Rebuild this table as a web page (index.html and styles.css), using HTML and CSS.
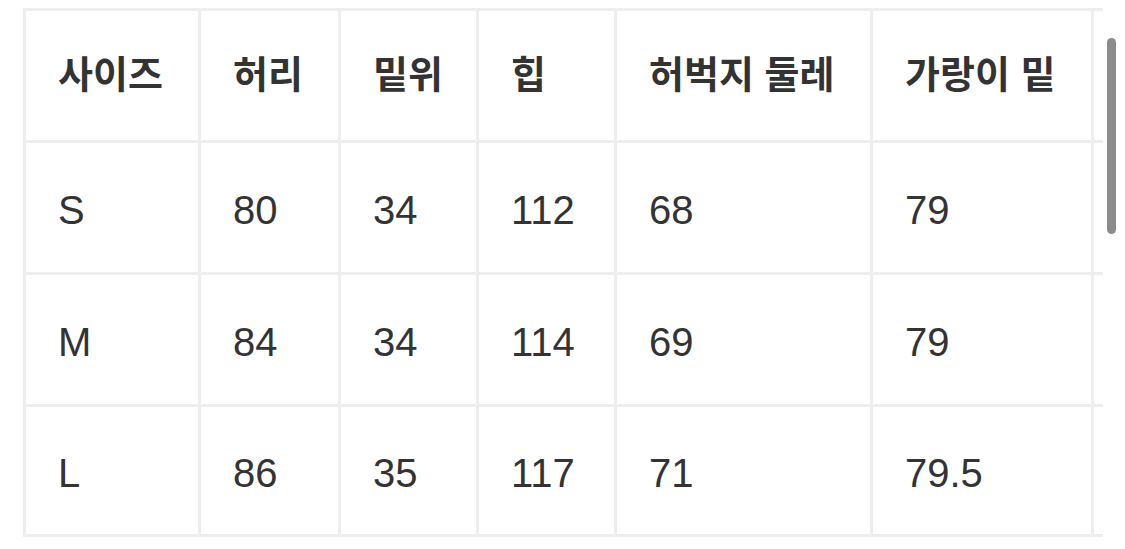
FILE: index.html
```html
<!DOCTYPE html>
<html lang="ko">
<head>
<meta charset="utf-8">
<title>사이즈</title>
<link rel="stylesheet" href="styles.css">
</head>
<body>
<div class="frame">
  <table class="size-table">
    <colgroup>
      <col class="c1"><col class="c2"><col class="c3"><col class="c4"><col class="c5"><col class="c6"><col class="c7">
    </colgroup>
    <tr class="row head">
      <th>사이즈</th><th>허리</th><th>밑위</th><th>힙</th><th>허벅지 둘레</th><th>가랑이 밑</th><th></th>
    </tr>
    <tr class="row">
      <td>S</td><td>80</td><td>34</td><td>112</td><td>68</td><td>79</td><td></td>
    </tr>
    <tr class="row">
      <td>M</td><td>84</td><td>34</td><td>114</td><td>69</td><td>79</td><td></td>
    </tr>
    <tr class="row last">
      <td>L</td><td>86</td><td>35</td><td>117</td><td>71</td><td>79.5</td><td></td>
    </tr>
  </table>
</div>
<div class="scroll-thumb"></div>
</body>
</html>
```

FILE: styles.css
```css
html, body {
  margin: 0;
  padding: 0;
  background: #ffffff;
}
body {
  position: relative;
  width: 1125px;
  height: 549px;
  overflow: hidden;
  font-family: "Liberation Sans", "Noto Sans CJK KR", sans-serif;
  color: #333333;
}
.frame {
  margin: 8px 0 0 23px;
  width: 1080px;
  overflow: hidden;
}
.size-table {
  border-collapse: separate;
  border-spacing: 0;
  table-layout: fixed;
  width: 1271px;
  border-top: 3px solid #eeeeee;
  border-left: 3px solid #eeeeee;
}
.c1 { width: 175px; }
.c2 { width: 140px; }
.c3 { width: 138px; }
.c4 { width: 138px; }
.c5 { width: 256px; }
.c6 { width: 221px; }
.c7 { width: 200px; }
.size-table th,
.size-table td {
  box-sizing: border-box;
  border-right: 3px solid #eeeeee;
  border-bottom: 3px solid #eeeeee;
  padding: 0 0 0 32px;
  text-align: left;
  vertical-align: middle;
  white-space: nowrap;
  overflow: hidden;
}
.row { height: 132px; }
.row.last { height: 130px; }
.size-table th {
  font-family: "Noto Sans CJK KR", sans-serif;
  font-weight: 700;
  font-size: 38px;
  color: #333333;
  padding-bottom: 8px;
}
.size-table td {
  font-size: 40px;
  font-weight: 400;
  color: #333333;
  padding-top: 5px;
}
.scroll-thumb {
  position: absolute;
  left: 1107px;
  top: 38px;
  width: 9px;
  height: 196px;
  border-radius: 5px;
  background: #8c8c8c;
}
```
